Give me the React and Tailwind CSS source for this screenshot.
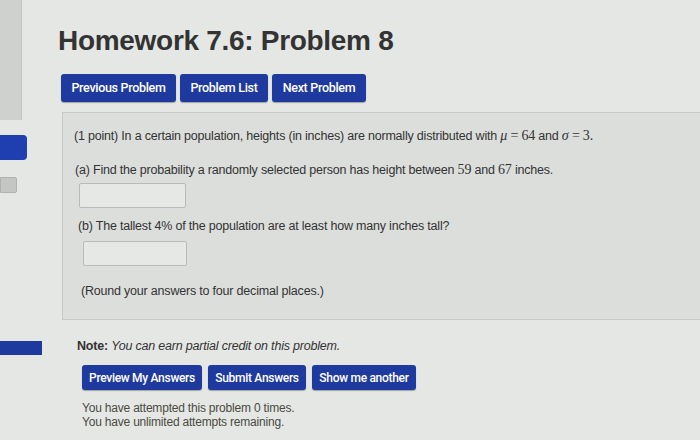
import React from "react";

function Btn({ children, className = "" }) {
  return (
    <div
      className={`flex items-center justify-center rounded-[3px] bg-[#1f3a9e] text-white font-medium tracking-[-0.3px] shadow-[0_1px_1px_rgba(0,0,0,0.3)] ${className}`}
      style={{ fontFamily: 'Roboto, "Liberation Sans", sans-serif' }}
    >
      {children}
    </div>
  );
}

export default function App() {
  return (
    <div
      className="w-[700px] h-[440px] overflow-hidden flex bg-[#e5e7e5] text-[#333]"
      style={{ fontFamily: '"Liberation Sans", Arial, sans-serif' }}
    >
      {/* left rail */}
      <div className="w-[58px] shrink-0 flex flex-col">
        <div className="w-[22px] h-[120px] bg-[#cfd1cf] border-r border-[#c2c4c2]" />
        <div className="mt-[15px] w-[27px] h-[25px] bg-[#1f3fb0] rounded-r-[4px]" />
        <div className="mt-[17px] w-[17px] h-[16px] bg-[#c4c6c4] border border-[#b0b2b0] rounded-r-[2px]" />
        <div className="mt-[148px] w-[42px] h-[14px] bg-[#1f3a9e]" />
      </div>

      {/* main */}
      <div className="flex-1 flex flex-col">
        <h1 className="mt-[24px] text-[28px] leading-[34px] font-bold text-[#333] tracking-[-0.3px]">
          Homework 7.6: Problem 8
        </h1>

        <div className="mt-[16px] ml-[3px] flex gap-[4px]">
          <Btn className="w-[115px] h-[28px] text-[12.5px]">Previous Problem</Btn>
          <Btn className="w-[88px] h-[28px] text-[12.5px]">Problem List</Btn>
          <Btn className="w-[94px] h-[28px] text-[12.5px]">Next Problem</Btn>
        </div>

        <div className="mt-[10px] ml-[4px] h-[208px] bg-[#dcdedc] border-t border-l border-b border-[#c8cac8] flex flex-col text-[12.5px] text-[#333] tracking-[-0.2px]">
          <p className="mt-[14px] ml-[11px] leading-[18px]">
            (1 point) In a certain population, heights (in inches) are normally distributed with{" "}
            <span style={{ fontFamily: '"Liberation Serif", serif' }} className="text-[14px]">
              <i>μ</i> = 64
            </span>{" "}
            and{" "}
            <span style={{ fontFamily: '"Liberation Serif", serif' }} className="text-[14px]">
              <i>σ</i> = 3.
            </span>
          </p>
          <p className="mt-[16px] ml-[12px] leading-[18px]">
            (a) Find the probability a randomly selected person has height between{" "}
            <span style={{ fontFamily: '"Liberation Serif", serif' }} className="text-[14px]">59</span> and{" "}
            <span style={{ fontFamily: '"Liberation Serif", serif' }} className="text-[14px]">67</span> inches.
          </p>
          <div className="mt-[4px] ml-[16px] w-[107px] h-[25px] border border-[#b9bbb9] bg-[#e6e8e6] rounded-[2px]" />
          <p className="mt-[9px] ml-[15px] leading-[18px]">
            (b) The tallest 4% of the population are at least how many inches tall?
          </p>
          <div className="mt-[6px] ml-[20px] w-[104px] h-[25px] border border-[#b9bbb9] bg-[#e6e8e6] rounded-[2px]" />
          <p className="mt-[16px] ml-[18px] leading-[18px]">
            (Round your answers to four decimal places.)
          </p>
        </div>

        <p className="mt-[17px] ml-[19px] text-[12.5px] leading-[18px] tracking-[-0.2px]">
          <b>Note:</b> <i>You can earn partial credit on this problem.</i>
        </p>

        <div className="mt-[10px] ml-[24px] flex gap-[6px]">
          <Btn className="w-[120px] h-[25px] text-[12px]">Preview My Answers</Btn>
          <Btn className="w-[98px] h-[25px] text-[12px]">Submit Answers</Btn>
          <Btn className="w-[104px] h-[25px] text-[12px]">Show me another</Btn>
        </div>

        <div className="mt-[11px] ml-[24px] text-[12px] leading-[14px] text-[#4a4a40] tracking-[-0.2px]">
          <p>You have attempted this problem 0 times.</p>
          <p>You have unlimited attempts remaining.</p>
        </div>
      </div>
    </div>
  );
}
